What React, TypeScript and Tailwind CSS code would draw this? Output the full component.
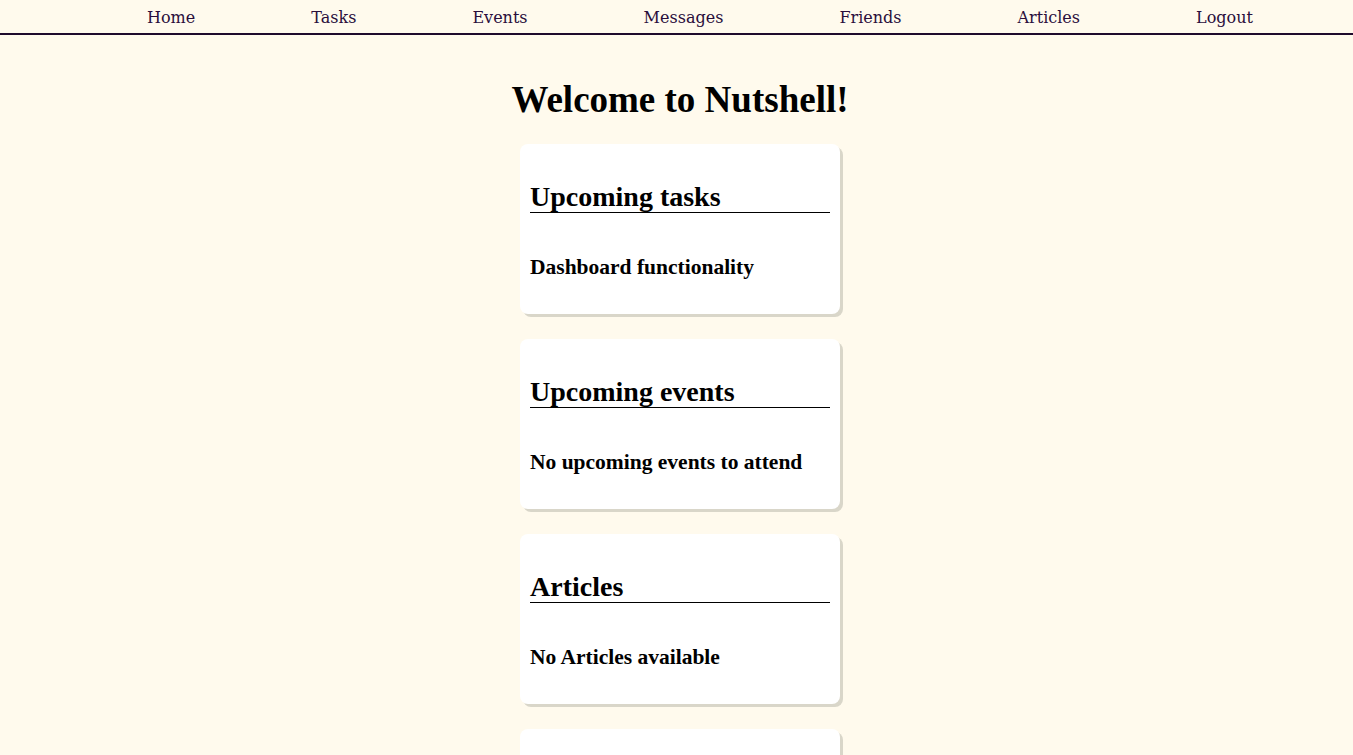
import React from "react";

const links = ["Home", "Tasks", "Events", "Messages", "Friends", "Articles", "Logout"];

const cards = [
  { title: "Upcoming tasks", body: "Dashboard functionality" },
  { title: "Upcoming events", body: "No upcoming events to attend" },
  { title: "Articles", body: "No Articles available" },
  { title: "", body: "" },
];

export default function App() {
  return (
    <div
      className="min-h-[755px] bg-[#fffaed] text-black"
      style={{ fontFamily: '"Liberation Serif", "DejaVu Serif", serif' }}
    >
      <nav className="h-[35px] border-b-2 border-[#1e0a2c]">
        <ul
          className="flex h-[33px] items-center justify-between pl-[147px] pr-[100px] pt-[2px] text-[16px] text-[#2a0e3c]"
          style={{ fontFamily: '"DejaVu Serif", serif' }}
        >
          {links.map((l) => (
            <li key={l}>{l}</li>
          ))}
        </ul>
      </nav>
      <main className="flex flex-col items-center pl-[7px]">
        <h1 className="mt-[45px] text-[37px] font-bold leading-[40px]">Welcome to Nutshell!</h1>
        <div className="mt-[24px] flex flex-col gap-[25px]">
          {cards.map((c, i) => (
            <section
              key={i}
              className="h-[170px] w-[320px] rounded-[8px] bg-white px-[10px] pt-[37px] shadow-[3px_3px_0_#d9d6c9]"
            >
              {c.title && (
                <>
                  <h2 className="border-b border-black text-[28px] font-bold leading-[31px]">{c.title}</h2>
                  <p className="mt-[42px] text-[21.5px] font-bold leading-[24px]">{c.body}</p>
                </>
              )}
            </section>
          ))}
        </div>
      </main>
    </div>
  );
}
